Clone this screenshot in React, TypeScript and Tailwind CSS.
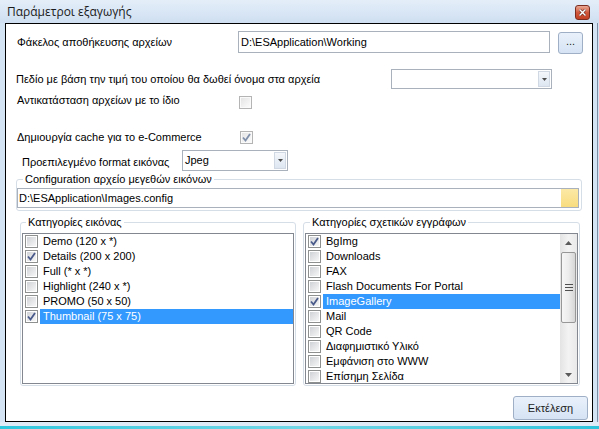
import clsx from "clsx";

type Item = { label: string; checked?: boolean; selected?: boolean };

const imageSizes: Item[] = [
  { label: "Demo (120 x *)" },
  { label: "Details (200 x 200)", checked: true },
  { label: "Full (* x *)" },
  { label: "Highlight (240 x *)" },
  { label: "PROMO (50 x 50)" },
  { label: "Thumbnail (75 x 75)", checked: true, selected: true },
];

const docCategories: Item[] = [
  { label: "BgImg", checked: true },
  { label: "Downloads" },
  { label: "FAX" },
  { label: "Flash Documents For Portal" },
  { label: "ImageGallery", checked: true, selected: true },
  { label: "Mail" },
  { label: "QR Code" },
  { label: "Διαφημιστικό Υλικό" },
  { label: "Εμφάνιση στο WWW" },
  { label: "Επίσημη Σελίδα" },
];

function CheckBox({ checked, muted }: { checked?: boolean; muted?: boolean }) {
  return (
    <span
      className={clsx(
        "relative block h-[13px] w-[13px] shrink-0 border p-[1px]",
        muted ? "border-[#b4b4b4] bg-[#fafafa]" : "border-[#8e8f8f] bg-white"
      )}
    >
      <span
        className={clsx(
          "block h-full w-full bg-gradient-to-br",
          muted ? "from-[#e4e4e4] to-[#fbfbfb]" : "from-[#cfd2d6] to-[#f7f7f7]"
        )}
      />
      {checked && (
        <svg className="absolute left-0 top-0" width="11" height="11" viewBox="0 0 11 11">
          <path
            d="M2 5.5 L4.5 8.5 L9 2"
            fill="none"
            stroke={muted ? "#8090ab" : "#4a5a8a"}
            strokeWidth="1.8"
          />
        </svg>
      )}
    </span>
  );
}

function DropArrow() {
  return (
    <svg width="5" height="3" viewBox="0 0 5 3">
      <path d="M0 0 H5 L2.5 3 Z" fill="#4d4d4d" />
    </svg>
  );
}

function ComboBox({ value, className }: { value?: string; className: string }) {
  return (
    <div className={clsx("flex border border-[#a9b1bd] bg-white", className)}>
      <span className="flex flex-1 items-center pl-[2px]">{value}</span>
      <span className="m-[1px] flex w-[12px] items-center justify-center border border-[#cfd8e3] bg-gradient-to-b from-[#f4f7fb] to-[#dde6f1]">
        <DropArrow />
      </span>
    </div>
  );
}

function ListRow({ item }: { item: Item }) {
  return (
    <div className="flex h-[15px] shrink-0 items-center pl-[2px]">
      <CheckBox checked={item.checked} />
      <span
        className={clsx(
          "ml-[2px] flex h-[15px] flex-1 items-center whitespace-nowrap pl-[3px]",
          item.selected && "bg-[#3399ff] text-white"
        )}
      >
        {item.label}
      </span>
    </div>
  );
}

function ScrollBar() {
  return (
    <div className="flex w-[17px] shrink-0 flex-col bg-gradient-to-r from-[#e4e4e4] via-[#f3f3f3] to-[#e9e9e9]">
      <div className="flex h-[17px] items-center justify-center">
        <svg width="7" height="4" viewBox="0 0 7 4">
          <path d="M0 4 L3.5 0 L7 4 Z" fill="#5b5b5b" />
        </svg>
      </div>
      <div className="mx-[1px] mt-[1px] flex h-[71px] items-center justify-center rounded-[2px] border border-[#979797] bg-gradient-to-r from-[#f6f6f6] via-[#ececec] to-[#d6d6d6]">
        <svg width="8" height="7" viewBox="0 0 8 7">
          <path d="M0 0.5 H8 M0 3.5 H8 M0 6.5 H8" stroke="#4f4f4f" strokeWidth="1" />
        </svg>
      </div>
      <div className="flex-1" />
      <div className="flex h-[17px] items-center justify-center">
        <svg width="7" height="4" viewBox="0 0 7 4">
          <path d="M0 0 H7 L3.5 4 Z" fill="#5b5b5b" />
        </svg>
      </div>
    </div>
  );
}

function Button({ children, className }: { children: React.ReactNode; className: string }) {
  return (
    <button
      className={clsx(
        "flex items-center justify-center rounded-[3px] border border-[#9fb0c6] bg-gradient-to-b from-[#e9f1fb] to-[#d6e3f4] text-[#1b1b1b]",
        className
      )}
    >
      {children}
    </button>
  );
}

export default function App() {
  return (
    <div className="h-[429px] w-[599px] overflow-hidden bg-[#d5e4f5] font-['Liberation_Sans',Arial,sans-serif] text-[11px] leading-[13px] text-black">
      {/* title bar */}
      <div className="flex h-[23px] items-start justify-between bg-gradient-to-b from-[#e4eef9] to-[#cfdff1]">
        <span className="pl-[7px] pt-[3px] font-['Open_Sans',sans-serif] text-[12px] leading-[17px] text-[#1a1a1a]">
          Παράμετροι εξαγωγής
        </span>
        <span className="mr-[9px] mt-[5px] flex h-[15px] w-[15px] items-center justify-center rounded-[3px] border border-[#7b2e1f] bg-gradient-to-b from-[#e9a894] via-[#d0583c] to-[#c13f22]">
          <svg width="7" height="7" viewBox="0 0 7 7">
            <path d="M0.5 0.5 L6.5 6.5 M6.5 0.5 L0.5 6.5" stroke="#5a1d12" strokeWidth="2.6" />
            <path d="M0.5 0.5 L6.5 6.5 M6.5 0.5 L0.5 6.5" stroke="#ffffff" strokeWidth="1.5" />
          </svg>
        </span>
      </div>

      <div className="flex">
        <div className="w-[5px] shrink-0" />
        {/* client area */}
        <div className="h-[399px] w-[588px] shrink-0 border border-black bg-white">
          <div className="mt-[7px] flex h-[22px] items-start">
            <span className="flex h-[22px] w-[232px] shrink-0 items-center pl-[11px]">
              Φάκελος αποθήκευσης αρχείων
            </span>
            <div className="flex h-[22px] w-[312px] shrink-0 items-center border border-[#a9b1bd] pl-[2px]">
              D:\ESApplication\Working
            </div>
            <Button className="ml-[8px] mt-[1px] h-[22px] w-[25px] items-end pb-[5px]">...</Button>
          </div>

          <div className="mt-[16px] flex h-[20px] items-center">
            <span className="w-[385px] shrink-0 pl-[10px]">
              Πεδίο με βάση την τιμή του οποίου θα δωθεί όνομα στα αρχεία
            </span>
            <ComboBox className="h-[20px] w-[161px]" />
          </div>

          <div className="mt-[4px] flex h-[15px] items-start">
            <span className="w-[233px] shrink-0 pl-[11px] leading-[15px]">
              Αντικατάσταση αρχείων με το ίδιο
            </span>
            <span className="mt-[3px]">
              <CheckBox muted />
            </span>
          </div>

          <div className="mt-[22px] flex h-[15px] items-start">
            <span className="w-[234px] shrink-0 pl-[11px] leading-[15px]">
              Δημιουργία cache για το e-Commerce
            </span>
            <span className="mt-[1px]">
              <CheckBox checked muted />
            </span>
          </div>

          <div className="mt-[5px] flex h-[21px] items-start">
            <span className="w-[176px] shrink-0 pl-[16px] pt-[5px] leading-[15px]">
              Προεπιλεγμένο format εικόνας
            </span>
            <ComboBox value="Jpeg" className="h-[21px] w-[106px]" />
          </div>

          <fieldset className="ml-[10px] mt-[2px] w-[566px] rounded-[3px] border border-[#d5dde6] pb-[2px]">
            <legend className="ml-[6px] px-[2px] leading-[13px]">
              Configuration αρχείο μεγεθών εικόνων
            </legend>
            <div className="mt-[2px] flex h-[20px] w-[562px] border border-[#a9b1bd]">
              <span className="flex flex-1 items-center pl-[1px]">D:\ESApplication\Images.config</span>
              <span className="w-[17px] bg-gradient-to-b from-[#fce9a6] to-[#f8dc7e]" />
            </div>
          </fieldset>

          <div className="ml-[14px] mt-[5px] flex gap-[7px]">
            <fieldset className="w-[276px] rounded-[3px] border border-[#d5dde6] px-[1px] pb-[1px]">
              <legend className="ml-[4px] px-[2px] leading-[13px]">Κατηγορίες εικόνας</legend>
              <div className="mt-[4px] flex h-[151px] w-[272px] flex-col overflow-hidden border border-[#828790] bg-white">
                {imageSizes.map((item) => (
                  <ListRow key={item.label} item={item} />
                ))}
              </div>
            </fieldset>

            <fieldset className="w-[277px] rounded-[3px] border border-[#d5dde6] px-[1px] pb-[1px]">
              <legend className="ml-[5px] px-[2px] leading-[13px]">Κατηγορίες σχετικών εγγράφων</legend>
              <div className="mt-[4px] flex h-[151px] w-[273px] overflow-hidden border border-[#828790] bg-white">
                <div className="flex flex-1 flex-col overflow-hidden">
                  {docCategories.map((item) => (
                    <ListRow key={item.label} item={item} />
                  ))}
                </div>
                <ScrollBar />
              </div>
            </fieldset>
          </div>

          <div className="mt-[10px] flex justify-end pr-[4px]">
            <Button className="h-[24px] w-[75px]">Εκτέλεση</Button>
          </div>
        </div>
        {/* right frame */}
        <div className="w-[4px] shrink-0" />
        <div className="w-[1px] shrink-0 bg-[#7d8fa4]" />
      </div>

      {/* bottom frame */}
      <div className="h-[4px] bg-[#dfeaf7]" />
      <div className="h-[3px] bg-gradient-to-r from-[#2cc7de] via-[#6fd6e6] to-[#2cc3db]" />
    </div>
  );
}
